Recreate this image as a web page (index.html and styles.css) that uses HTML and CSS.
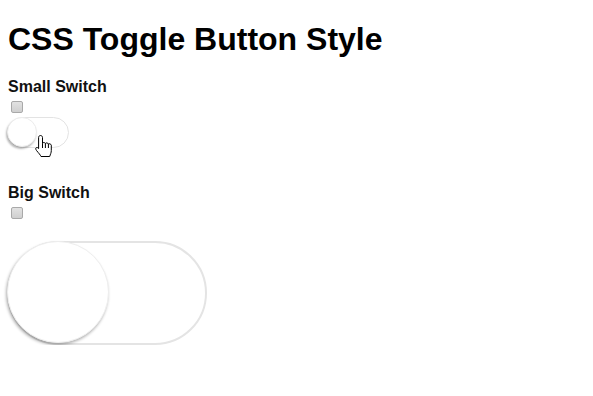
FILE: index.html
```html
<!DOCTYPE html>
<html>
<head>
<meta charset="utf-8">
<title>CSS Toggle Button Style</title>
<link rel="stylesheet" href="styles.css">
</head>
<body>
<div class="page">
  <h1 class="title">CSS Toggle Button Style</h1>

  <div class="group">
    <div class="label">Small Switch</div>
    <input type="checkbox" class="check">
    <div class="switch switch-small">
      <span class="knob"></span>
      <svg class="cursor" width="19" height="23" viewBox="0 0 19 23">
        <path d="M6.5 0.5 C7.6 0.5 8.5 1.3 8.5 2.5 V8.2 C9 7.3 10.8 7.3 11.4 8.4 C12 7.6 13.9 7.7 14.4 9 C15 8.5 16.9 8.7 17.3 10.2 V15.5 C17.3 17.8 16.4 19.2 15.7 21.5 H7 C6.3 19.8 4.8 18.3 2.6 15.6 C1.6 14.4 1.4 13 2.4 12.6 C3.3 12.2 4 12.8 4.6 13.6 V2.5 C4.6 1.3 5.4 0.5 6.5 0.5 Z" fill="#fff" stroke="#000" stroke-width="1" stroke-linejoin="round"/>
        <path d="M8.5 8.2 V13 M11.4 8.4 V13 M14.4 9 V13" fill="none" stroke="#000" stroke-width="1"/>
      </svg>
    </div>
  </div>

  <div class="group group-big">
    <div class="label">Big Switch</div>
    <input type="checkbox" class="check">
    <div class="switch switch-big">
      <span class="knob"></span>
    </div>
  </div>
</div>
</body>
</html>
```
FILE: styles.css
```css
html, body {
  margin: 0;
  padding: 0;
  background: #fff;
}

.page {
  padding: 0 8px;
  font-family: "Liberation Sans", Arial, sans-serif;
  color: #000;
}

.title {
  margin: 21px 0 0;
  font-size: 32px;
  line-height: 36px;
  font-weight: bold;
}

.group {
  display: flex;
  flex-direction: column;
  align-items: flex-start;
  margin-top: 20px;
}

.group-big {
  margin-top: 35px;
}

.label {
  font-size: 16px;
  line-height: 19px;
  font-weight: bold;
  color: #111;
}

.check {
  -webkit-appearance: none;
  appearance: none;
  display: block;
  box-sizing: border-box;
  width: 12px;
  height: 12px;
  margin: 5px 0 0 3px;
  border: 1px solid #a9a9a9;
  border-radius: 2px;
  background: linear-gradient(#e2e2e2, #cfcfcf);
}

.switch {
  position: relative;
  box-sizing: border-box;
  background: #fff;
  margin-left: -1px;
}

.switch-small {
  width: 62px;
  height: 31px;
  margin-top: 4px;
  border: 1px solid #e3e3e3;
  border-radius: 16px;
}

.switch-big {
  width: 200px;
  height: 104px;
  margin-top: 22px;
  border: 2px solid #e4e4e4;
  border-radius: 52px;
}

.knob {
  position: absolute;
  box-sizing: border-box;
  background: #fff;
  border-radius: 50%;
}

.switch-small .knob {
  top: -1px;
  left: -1px;
  width: 30px;
  height: 30px;
  border: 1px solid #ececec;
  box-shadow: -1px 2px 2px rgba(0, 0, 0, 0.28);
}

.switch-big .knob {
  top: -2px;
  left: -2px;
  width: 102px;
  height: 102px;
  border: 1px solid #eeeeee;
  box-shadow: -1px 2px 3px rgba(0, 0, 0, 0.3);
}

.cursor {
  position: absolute;
  left: 26px;
  top: 17px;
}
```
